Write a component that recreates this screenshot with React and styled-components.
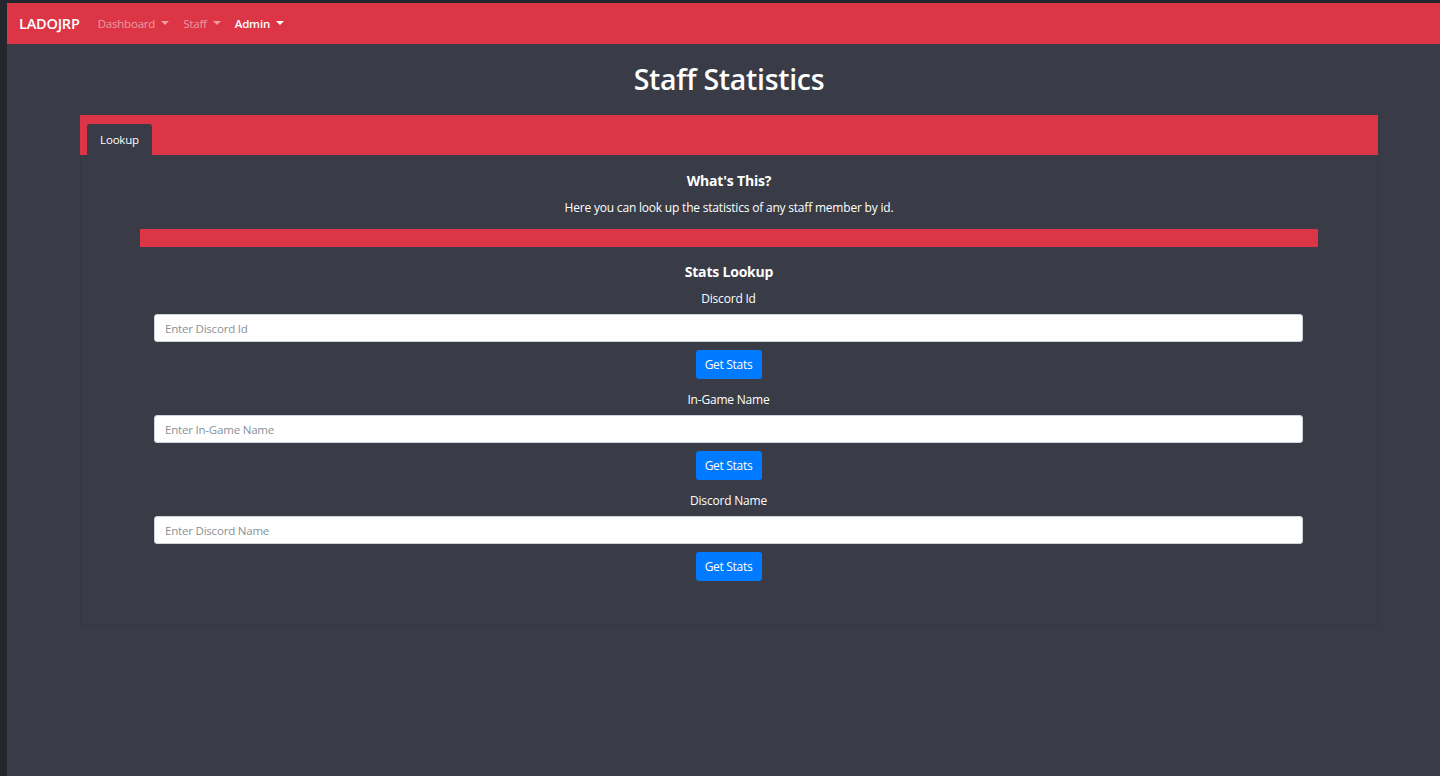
import styled, { createGlobalStyle } from "styled-components";

const GlobalStyle = createGlobalStyle`
  html, body {
    margin: 0;
    padding: 0;
    background: #25262d;
  }
  body {
    font-family: "Open Sans", "Noto Sans", sans-serif;
    color: #fff;
  }
  * {
    box-sizing: border-box;
  }
`;

const lookups = [
  { label: "Discord Id", placeholder: "Enter Discord Id" },
  { label: "In-Game Name", placeholder: "Enter In-Game Name" },
  { label: "Discord Name", placeholder: "Enter Discord Name" },
];

function Caret() {
  return (
    <svg width="8" height="5" viewBox="0 0 8 5">
      <path d="M0 0 L8 0 L4 4 Z" fill="currentColor" />
    </svg>
  );
}

function App() {
  return (
    <>
      <GlobalStyle />
      <Frame>
        <Navbar>
          <Brand>LADOJRP</Brand>
          <NavLinks>
            <NavLink>
              Dashboard <Caret />
            </NavLink>
            <NavLink>
              Staff <Caret />
            </NavLink>
            <NavLink active>
              Admin <Caret />
            </NavLink>
          </NavLinks>
        </Navbar>
        <Main>
          <Container>
            <Title>Staff Statistics</Title>
            <Card>
              <CardHeader>
                <Tab>Lookup</Tab>
              </CardHeader>
              <CardBody>
                <Heading>What's This?</Heading>
                <Text>Here you can look up the statistics of any staff member by id.</Text>
                <Divider />
                <Heading className="lookup">Stats Lookup</Heading>
                {lookups.map((item) => (
                  <Group key={item.label}>
                    <Label>{item.label}</Label>
                    <Input placeholder={item.placeholder} />
                    <Button>Get Stats</Button>
                  </Group>
                ))}
              </CardBody>
            </Card>
          </Container>
        </Main>
      </Frame>
    </>
  );
}

const Frame = styled.div`
  min-height: 776px;
  padding: 3px 0 0 7px;
  background: #25262d;
  display: flex;
  flex-direction: column;
`;

const Navbar = styled.nav`
  height: 41px;
  background: #dc3545;
  display: flex;
  align-items: center;
  padding: 0 12px;
`;

const Brand = styled.span`
  font-size: 14.5px;
  font-weight: 600;
  color: #fff;
  margin-right: 18px;
  letter-spacing: -0.2px;
`;

const NavLinks = styled.div`
  display: flex;
  align-items: center;
  gap: 14px;
`;

const NavLink = styled.span`
  display: flex;
  align-items: center;
  gap: 6px;
  font-size: 11.5px;
  font-weight: ${(props) => (props.active ? 600 : 400)};
  color: ${(props) => (props.active ? "#fff" : "rgba(255,255,255,0.5)")};
  letter-spacing: -0.2px;
`;

const Main = styled.main`
  flex: 1;
  background: #393b46;
`;

const Container = styled.div`
  margin: 0 62px 0 73px;
  padding-top: 17px;
`;

const Title = styled.h1`
  margin: 0 0 18px;
  text-align: center;
  font-size: 28.5px;
  line-height: 36px;
  font-weight: 600;
  letter-spacing: -0.3px;
`;

const Card = styled.div`
  border: 1px solid rgba(0, 0, 0, 0.04);
  border-top: none;
  box-shadow: 0 2px 3px rgba(0, 0, 0, 0.04);
`;

const CardHeader = styled.div`
  height: 40px;
  background: #dc3545;
  display: flex;
  align-items: flex-end;
  padding-left: 7px;
  margin: 0 -1px;
`;

const Tab = styled.div`
  width: 65px;
  height: 31px;
  background: #393b46;
  border-radius: 3px 3px 0 0;
  display: flex;
  align-items: center;
  justify-content: center;
  font-size: 11.5px;
  color: #fff;
  letter-spacing: -0.2px;
`;

const CardBody = styled.div`
  padding: 16px 0 44px;
  display: flex;
  flex-direction: column;
  align-items: center;
  text-align: center;

  .lookup {
    margin-top: 15px;
  }
`;

const Heading = styled.h5`
  margin: 0;
  font-size: 14px;
  line-height: 20px;
  font-weight: 700;
  letter-spacing: -0.2px;
`;

const Text = styled.p`
  margin: 8px 0 12px;
  font-size: 12px;
  line-height: 18px;
  letter-spacing: -0.2px;
`;

const Divider = styled.div`
  align-self: stretch;
  margin: 0 59px;
  height: 18px;
  background: #dc3545;
`;

const Group = styled.div`
  align-self: stretch;
  margin: 8px 74px 0 73px;
  display: flex;
  flex-direction: column;
  align-items: center;
  & + & {
    margin-top: 12px;
  }
`;

const Label = styled.label`
  font-size: 12px;
  line-height: 18px;
  letter-spacing: -0.2px;
  margin-bottom: 6px;
`;

const Input = styled.input`
  width: 100%;
  height: 28px;
  border: 1px solid #ced4da;
  border-radius: 3px;
  background: #fff;
  padding: 0 10px;
  font-family: "Open Sans", "Noto Sans", sans-serif;
  font-size: 11.5px;
  letter-spacing: -0.2px;
  &::placeholder {
    color: #8a9097;
  }
`;

const Button = styled.button`
  margin-top: 8px;
  width: 66px;
  height: 29px;
  border: none;
  border-radius: 3px;
  background: #007bff;
  color: #fff;
  font-family: "Open Sans", "Noto Sans", sans-serif;
  font-size: 12px;
  letter-spacing: -0.3px;
  padding: 0;
`;

export default App;
